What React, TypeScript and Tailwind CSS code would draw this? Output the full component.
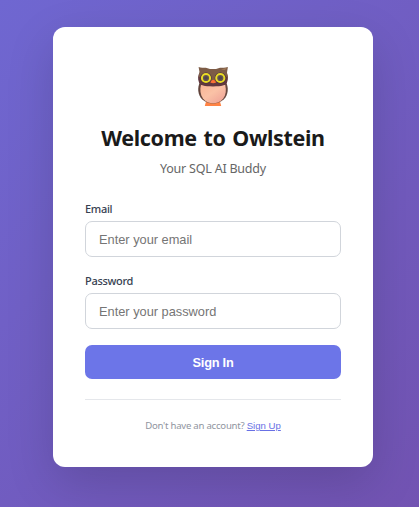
import React from "react";

function Owl() {
  return (
    <svg width="32" height="40" viewBox="0 0 32 40" aria-hidden="true">
      <defs>
        <linearGradient id="belly" x1="0" y1="0" x2="1" y2="1">
          <stop offset="0" stopColor="#f8b696" />
          <stop offset="0.45" stopColor="#fac2a6" />
          <stop offset="1" stopColor="#ed9d94" />
        </linearGradient>
        <linearGradient id="body" x1="0" y1="0" x2="1" y2="0">
          <stop offset="0" stopColor="#5d4039" />
          <stop offset="0.5" stopColor="#7d5b45" />
          <stop offset="1" stopColor="#65463e" />
        </linearGradient>
      </defs>
      <path d="M9 34.500h14l1.200 4.500H7.800z" fill="#ff8344" />
      <path d="M3 15C.3 20 .4 28 5.300 32.500Q10 36.500 16 36.500t10.700-4C31.600 28 31.700 20 29 15z" fill="url(#body)" />
      <path d="M4 18H28.200c1.300 5.500.6 10-2 13.400C23.600 34.700 19.400 36.300 16 36.300S8.600 34.700 6 31.400C3.300 27.800 2.700 22.500 4 18z" fill="url(#belly)" />
      <path d="M3 5C.8 8 .5 12 2 15.500c1.500 3 5 3.900 14 3.900s12.500-.9 14-3.900C31.500 12 31.200 8 29 5H7z" fill="#60383f" />
      <path d="M1.600 0c2.300 1.200 5 .4 7.300.8L13 2h6l4-1.200c2.300-.4 5 .4 7.900-.8L30 5.500l1 5-7-3-5.500 5.500h-5L8 7.500l-6.500 3L2.500 5z" fill="#7d5c46" />
      <path d="m24 2.500 6-1.800-2 2.300z" fill="#a27b58" />
      <circle cx="9" cy="11" r="5.600" fill="#49333c" />
      <circle cx="23.300" cy="11" r="5.600" fill="#49333c" />
      <circle cx="9" cy="11" r="4.100" fill="#65564f" stroke="#eadb25" strokeWidth="2" />
      <circle cx="23.300" cy="11" r="4.100" fill="#65564f" stroke="#eadb25" strokeWidth="2" />
      <circle cx="9" cy="11" r="1.800" fill="#50454d" />
      <circle cx="23.300" cy="11" r="1.800" fill="#50454d" />
      <path d="M13.300 15.500q.7-2.800 2.900-2.800t2.900 2.800q-2.900 1.400-5.800 0z" fill="#fa7136" />
    </svg>
  );
}

function Field({ id, label, type, placeholder }: { id: string; label: string; type: string; placeholder: string }) {
  return (
    <div className="mb-4 h-14">
      <label htmlFor={id} className="block h-5 text-[11px] leading-4 font-medium tracking-[-0.3px] text-[#374151]">{label}</label>
      <input
        id={id}
        type={type}
        placeholder={placeholder}
        className="block h-9 w-full rounded-[7px] border border-[#d1d5db] px-[13px] font-['Liberation_Sans',sans-serif] text-[12.8px] placeholder:text-[#757575]"
      />
    </div>
  );
}

export default function App() {
  return (
    <main className="flex h-[507px] w-[419px] items-start overflow-hidden bg-linear-[135deg,#6f67d1_0%,#7253b2_100%] pt-[27px] pl-[53px] font-['Noto_Sans',sans-serif]">
      <section className="flex h-[440px] w-80 shrink-0 flex-col rounded-xl bg-white px-8 pt-10 shadow-[0_16px_48px_rgba(0,0,0,0.15)]">
        <div className="flex h-10 justify-center"><Owl /></div>
        <h1 className="mt-4 text-center text-[21.5px] leading-[30px] font-bold tracking-[-0.35px] [word-spacing:1.5px] whitespace-nowrap text-[#1a1a1a]">Welcome to Owlstein</h1>
        <p className="mt-[6px] mb-[22px] text-center text-[12.5px] leading-5 tracking-[-0.22px] text-[#666666]">Your SQL AI Buddy</p>
        <form onSubmit={(e) => e.preventDefault()}>
          <Field id="email" label="Email" type="email" placeholder="Enter your email" />
          <Field id="password" label="Password" type="password" placeholder="Enter your password" />
          <button className="h-[34px] w-full rounded-[7px] bg-[#6c75e8] pt-px font-['Liberation_Sans',sans-serif] text-[12.8px] font-bold tracking-[-0.25px] text-white">Sign In</button>
        </form>
        <div className="mt-5 border-t border-[#e5e7eb] pt-[18px] text-center text-[9.6px] leading-4 tracking-[-0.24px] whitespace-nowrap text-[#9095a0]">
          Don't have an account?{" "}
          <a href="#" className="font-['Liberation_Sans',sans-serif] tracking-normal text-[#6870e5] underline">Sign Up</a>
        </div>
      </section>
    </main>
  );
}
